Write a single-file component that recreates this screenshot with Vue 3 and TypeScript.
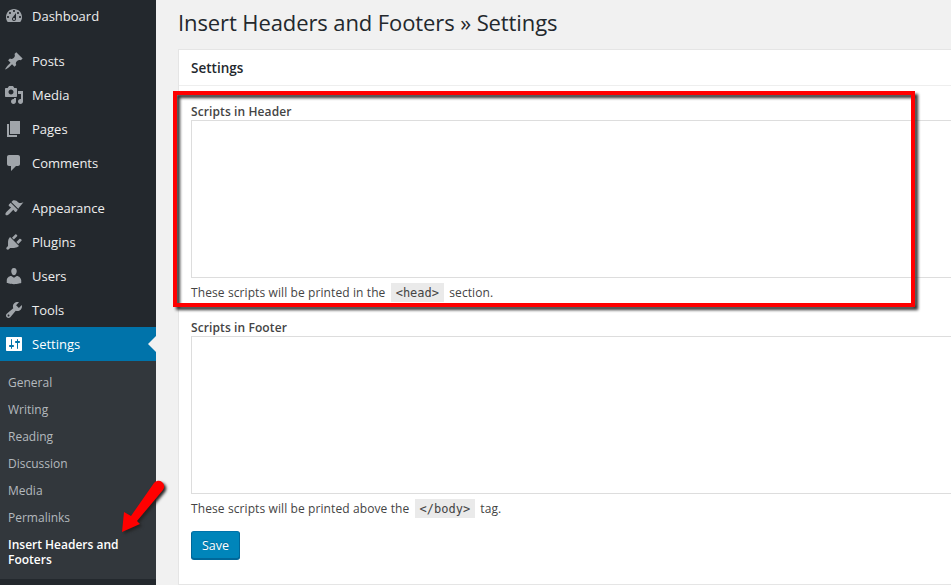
<script setup lang="ts">
interface MenuItem { label: string; icon: string; gapBefore?: boolean; current?: boolean }
const menu: MenuItem[] = [
  { label: 'Dashboard', icon: 'M3.76 16h12.48c1.1-1.37 1.76-3.11 1.76-5 0-4.42-3.58-8-8-8s-8 3.58-8 8c0 1.89.66 3.63 1.76 5zM10 4c.55 0 1 .45 1 1s-.45 1-1 1-1-.45-1-1 .45-1 1-1zM6 6c.55 0 1 .45 1 1s-.45 1-1 1-1-.45-1-1 .45-1 1-1zm8 0c.55 0 1 .45 1 1s-.45 1-1 1-1-.45-1-1 .45-1 1-1zm-5.37 5.55L12 7v6c0 1.1-.9 2-2 2s-2-.9-2-2c0-.57.24-1.08.63-1.45zM4 10c.55 0 1 .45 1 1s-.45 1-1 1-1-.45-1-1 .45-1 1-1zm12 0c.55 0 1 .45 1 1s-.45 1-1 1-1-.45-1-1 .45-1 1-1zm-5 3c0-.55-.45-1-1-1s-1 .45-1 1 .45 1 1 1 1-.45 1-1z' },
  { label: 'Posts', gapBefore: true, icon: 'M10.44 3.02l1.82-1.82 6.36 6.35-1.83 1.82c-1.05-.68-2.48-.57-3.41.36l-.75.75c-.92.93-1.04 2.35-.35 3.41l-1.83 1.82-2.41-2.41-2.8 2.79c-.42.42-3.38 2.71-3.8 2.29s1.86-3.39 2.28-3.81l2.79-2.79L4.1 9.36l1.83-1.82c1.05.69 2.48.57 3.4-.36l.75-.75c.93-.92 1.05-2.35.36-3.41z' },
  { label: 'Media', icon: 'M13 11V4c0-.55-.45-1-1-1h-1.67L9 1H5L3.67 3H2c-.55 0-1 .45-1 1v7c0 .55.45 1 1 1h10c.55 0 1-.45 1-1zM7 4.5c1.38 0 2.5 1.12 2.5 2.5S8.38 9.5 7 9.5 4.5 8.38 4.5 7 5.62 4.5 7 4.5zM14 6h5v10.5c0 1.38-1.12 2.5-2.5 2.5S14 17.88 14 16.5s1.12-2.5 2.5-2.5c.17 0 .34.02.5.05V9h-3V6zm-4 8.05V13h2v3.5c0 1.38-1.12 2.5-2.5 2.5S7 17.88 7 16.5 8.12 14 9.5 14c.17 0 .34.02.5.05z' },
  { label: 'Pages', icon: 'M6 15V2h10v13H6zm-1 1h8v2H3V5h2v11z' },
  { label: 'Comments', icon: 'M5 2h9c1.1 0 2 .9 2 2v7c0 1.1-.9 2-2 2h-2l-5 5v-5H5c-1.1 0-2-.9-2-2V4c0-1.1.9-2 2-2z' },
  { label: 'Appearance', gapBefore: true, icon: 'M14.48 11.06L7.41 3.99l1.5-1.5c.5-.56 2.3-.47 3.51.32.91.59 1.67 1.74 2.91 2.1 1.35.4 2.78.1 4.1-.6l-5.45 6.75zM13.77 11.77L6.7 4.7 4.93 6.47c-.39.39-.39 1.02 0 1.41l2.1 1.6-4.2 4c-1.3 1.25-1.8 2.6-1.1 3.4.8.8 2.2.3 3.5-1l4.1-4.2 1.6 2.1c.39.39 1.02.39 1.41 0z' },
  { label: 'Plugins', icon: 'M13.11 4.36L9.87 7.6 8 5.73l3.24-3.24c.35-.34 1.05-.2 1.56.32.52.51.66 1.21.31 1.55zm-8 1.77l.91-1.12 9.01 9.01-1.19.84c-.71.71-2.63 1.16-3.82 1.16H6.14L4.9 17.26c-.59.59-1.54.59-2.12 0-.59-.58-.59-1.53 0-2.12l1.24-1.24v-3.88c0-1.13.4-3.19 1.09-3.89zm7.26 3.97l3.24-3.24c.34-.35 1.04-.21 1.55.31.52.51.66 1.21.31 1.55l-3.24 3.25z' },
  { label: 'Users', icon: 'M10 9.25c-2.27 0-2.73-3.44-2.73-3.44C7 4.02 7.82 2 9.97 2c2.16 0 2.98 2.02 2.71 3.81 0 0-.41 3.44-2.68 3.44zm0 2.57L12.72 10c2.39 0 4.52 2.33 4.52 4.53v2.49s-3.65 1.13-7.24 1.13c-3.65 0-7.24-1.13-7.24-1.13v-2.49c0-2.25 1.94-4.48 4.47-4.48z' },
  { label: 'Tools', icon: 'M16.68 9.77c-1.34 1.34-3.3 1.67-4.95.99l-5.41 6.52c-.99.99-2.59.99-3.58 0s-.99-2.59 0-3.57l6.52-5.42c-.68-1.65-.35-3.61.99-4.95 1.28-1.28 3.12-1.62 4.72-1.06l-2.89 2.89 2.82 2.82 2.86-2.87c.53 1.58.18 3.39-1.08 4.65zM3.81 16.21c.4.39 1.04.39 1.43 0 .4-.4.4-1.04 0-1.43-.39-.4-1.03-.4-1.43 0-.39.39-.39 1.03 0 1.43z' },
  { label: 'Settings', current: true, icon: 'M18 16V4c0-.55-.45-1-1-1H3c-.55 0-1 .45-1 1v12c0 .55.45 1 1 1h14c.55 0 1-.45 1-1zM8 11h1c.55 0 1 .45 1 1s-.45 1-1 1H8v1.5c0 .28-.22.5-.5.5s-.5-.22-.5-.5V13H6c-.55 0-1-.45-1-1s.45-1 1-1h1V5.5c0-.28.22-.5.5-.5s.5.22.5.5V11zm5-2h-1c-.55 0-1-.45-1-1s.45-1 1-1h1V5.5c0-.28.22-.5.5-.5s.5.22.5.5V7h1c.55 0 1 .45 1 1s-.45 1-1 1h-1v5.5c0 .28-.22.5-.5.5s-.5-.22-.5-.5V9z' },
]
const submenu: string[] = ['General', 'Writing', 'Reading', 'Discussion', 'Media', 'Permalinks']
</script>

<template>
  <div class="page">
    <aside class="sidebar">
      <ul class="menu">
        <li
          v-for="item in menu"
          :key="item.label"
          class="menu-item"
          :class="{ gap: item.gapBefore, current: item.current }"
        >
          <svg class="menu-icon" viewBox="0 0 20 20" aria-hidden="true"><path :d="item.icon" /></svg>
          <span>{{ item.label }}</span>
        </li>
      </ul>
      <ul class="submenu">
        <li v-for="sub in submenu" :key="sub">{{ sub }}</li>
        <li class="sub-current">Insert Headers and Footers</li>
      </ul>
    </aside>

    <main class="content">
      <h1 class="title">Insert Headers and Footers » Settings</h1>
      <section class="card">
        <h2 class="card-title">Settings</h2>
        <div class="card-body">
          <label class="field-label">Scripts in Header</label>
          <textarea class="field"></textarea>
          <p class="note">These scripts will be printed in the <code>&lt;head&gt;</code> section.</p>

          <label class="field-label second">Scripts in Footer</label>
          <textarea class="field"></textarea>
          <p class="note">These scripts will be printed above the <code>&lt;/body&gt;</code> tag.</p>

          <button class="save" type="button">Save</button>
        </div>
      </section>
    </main>

    <div class="highlight"></div>
    <svg class="arrow" width="60" height="70" viewBox="0 0 60 70" aria-hidden="true">
      <path d="M2 62 L4 42 L11 46 L34 13 A5.5 5.5 0 0 1 43 20 L17 51 L20 54 Z" />
    </svg>
  </div>
</template>

<style>
html, body { margin: 0; padding: 0; background: #f1f1f1; }
</style>

<style scoped>
.page {
  position: relative;
  display: flex;
  width: 951px;
  height: 585px;
  overflow: hidden;
  background: #f1f1f1;
  font-family: "Open Sans", "Liberation Sans", sans-serif;
  font-size: 12px;
  color: #444;
}
.sidebar {
  flex: 0 0 156px;
  background: #23282d;
}
.menu, .submenu { list-style: none; margin: 0; padding: 0; }
.menu { margin-top: -1px; }
.menu-item {
  position: relative;
  display: flex;
  align-items: center;
  gap: 8px;
  height: 34px;
  padding-left: 4px;
  font-size: 13px;
  line-height: 18px;
  color: #eee;
}
.menu-item.gap { margin-top: 11px; }
.menu-icon { width: 20px; height: 20px; flex: none; fill: #a0a5aa; }
.menu-item.current { background: #0073aa; color: #fff; }
.menu-item.current .menu-icon { fill: #fff; }
.menu-item.current::after {
  content: "";
  position: absolute;
  right: 0;
  top: 9px;
  border: 8px solid transparent;
  border-right-color: #f1f1f1;
  border-left-width: 0;
}
.submenu {
  background: #32373c;
  padding: 8px 0 6px;
  line-height: 15px;
  color: #b4b9be;
}
.submenu li { padding: 6px 12px 6px 8px; }
.submenu .sub-current { color: #fff; font-weight: 600; }

.content { flex: 1; min-width: 0; padding: 8px 0 0 22px; }
.title {
  margin: 0 0 12px;
  font-size: 22px;
  font-weight: 400;
  letter-spacing: -0.1px;
  line-height: 29px;
  color: #23282d;
  white-space: nowrap;
}
.card {
  box-sizing: border-box;
  width: 1000px;
  height: 536px;
  background: #fff;
  border: 1px solid #e5e5e5;
}
.card-title {
  box-sizing: border-box;
  height: 36px;
  margin: 0;
  padding: 1px 0 0 12px;
  border-bottom: 1px solid #eee;
  font-size: 13.5px;
  font-weight: 600;
  line-height: 35px;
  color: #23282d;
}
.card-body { padding: 18px 12px 0; }
.field-label {
  display: block;
  font-weight: 600;
  letter-spacing: 0.1px;
  line-height: 16px;
  color: #444;
}
.field-label.second { margin-top: 18px; }
.field {
  display: block;
  box-sizing: border-box;
  width: 100%;
  height: 158px;
  margin: 0;
  padding: 2px 6px;
  background: #fff;
  border: 1px solid #ddd;
  border-radius: 0;
  outline: none;
  resize: none;
}
.note { margin: 6px 0 0; letter-spacing: 0.1px; line-height: 18px; color: #444; }
code {
  padding: 3px 5px 2px;
  margin: 0 2px;
  background: #eaeaea;
  font-family: "DejaVu Sans Mono", monospace;
  font-size: 12px;
  letter-spacing: 0;
}
.save {
  display: block;
  box-sizing: border-box;
  width: 49px;
  height: 28px;
  margin-top: 13px;
  padding: 0;
  background: #0085ba;
  border: 1px solid;
  border-color: #0073aa #006799 #006799;
  border-radius: 3px;
  box-shadow: 0 1px 0 #006799;
  color: #fff;
  font-family: inherit;
  font-size: 12.5px;
  text-shadow: 0 -1px 1px #006799;
}
.highlight {
  position: absolute;
  left: 173px;
  top: 91px;
  box-sizing: border-box;
  width: 742px;
  height: 216px;
  border: 4px solid #f00;
  filter: drop-shadow(3px 3px 1.5px #333);
}
.arrow {
  position: absolute;
  left: 120px;
  top: 470px;
  fill: #f00;
  filter: drop-shadow(2px 2px 1.5px #222);
}
</style>
